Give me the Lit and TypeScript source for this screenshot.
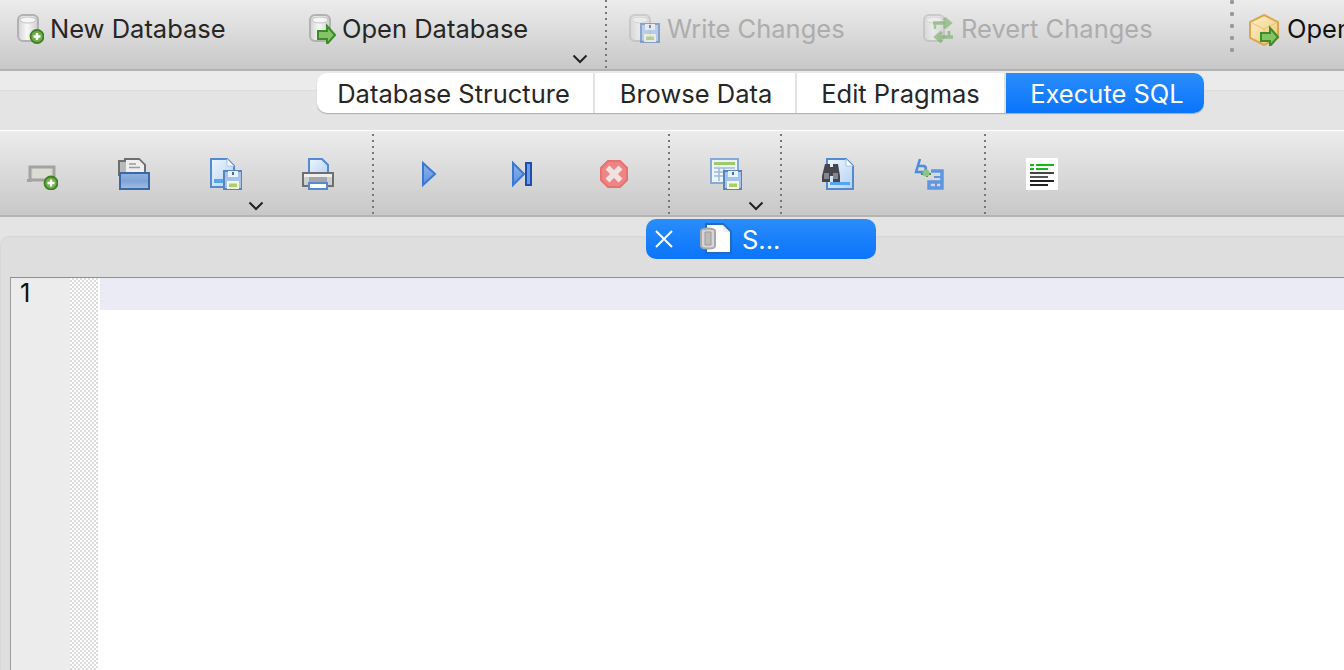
import { LitElement, html, css, svg } from "lit";
import { customElement } from "lit/decorators.js";

const defs = svg`<defs>
  <linearGradient id="cy" x1="0" x2="1" y1="0" y2="0"><stop offset="0" stop-color="#d2d2d2"/><stop offset=".45" stop-color="#f8f8f8"/><stop offset="1" stop-color="#cdcdcd"/></linearGradient>
  <linearGradient id="blu" x1="0" x2="0" y1="0" y2="1"><stop offset="0" stop-color="#8fb3e0"/><stop offset=".5" stop-color="#7ea4d6"/><stop offset="1" stop-color="#a3bfe3"/></linearGradient>
  <linearGradient id="pg" x1="0" x2="1" y1="0" y2="1"><stop offset="0" stop-color="#eef5fd"/><stop offset="1" stop-color="#b3d2f4"/></linearGradient>
  <linearGradient id="rb" x1="0" x2="1" y1="0" y2="1"><stop offset="0" stop-color="#fdf3cf"/><stop offset="1" stop-color="#ecc56f"/></linearGradient>
  <linearGradient id="pl" x1="0" x2="0" y1="0" y2="1"><stop offset="0" stop-color="#8ab3ea"/><stop offset="1" stop-color="#5f92dc"/></linearGradient>
</defs>`;
const cyl = (o = 1) => svg`<g opacity="${o}">
  <rect x="2" y="1" width="20" height="26" rx="5" fill="url(#cy)" stroke="#b2b2b2" stroke-width="2"/>
  <ellipse cx="12" cy="6" rx="8" ry="3" fill="#f6f6f6" stroke="#c4c4c4"/>
</g>`;
const plus = (x: number, y: number, r = 6.500) => svg`<circle cx="${x}" cy="${y}" r="${r}" fill="#6fae4f" stroke="#3f7f20" stroke-width="1.800"/><path d="M${x - 3.500} ${y}h7M${x} ${y - 3.500}v7" stroke="#fff" stroke-width="2.400"/>`;
const arrow = (x: number, y: number) => svg`<path d="M${x} ${y - 4}h9v-5l8 9-8 9v-5h-9z" fill="#86c266" stroke="#3c8c28" stroke-width="2"/>`;
const floppy = (x: number, y: number, o = 1) => svg`<g opacity="${o}" transform="translate(${x} ${y})">
  <path d="M1 1h18v18h-18z" fill="#a4c3ea" stroke="#5a83bd" stroke-width="2"/><path d="M5 1h10v6h-10z" fill="#eaf2fb"/><path d="M9 2h2v3h-2z" fill="#456fa8"/>
  <path d="M4 11h12v8h-12z" fill="#f2f6ea"/><path d="M6 13.500h8v3.500h-8z" fill="#a7cf6a"/></g>`;
const page = (x: number, y: number, w = 25, h = 30) => svg`<g transform="translate(${x} ${y})"><path d="M1 1h${w - 9}l7 7v${h - 9}h-${w - 2}z" fill="url(#pg)" stroke="#5489d4" stroke-width="2"/><path d="M${w - 8} 1v7h7" fill="#fff" stroke="#a9c7ec"/></g>`;

const icons: Record<string, unknown> = {
  newdb: svg`<svg class="i28" viewBox="0 0 28 30">${defs}${cyl()}${plus(21, 22.500)}</svg>`,
  opendb: svg`<svg class="i28" viewBox="0 0 28 30">${defs}${cyl()}${arrow(10, 21)}</svg>`,
  write: svg`<svg class="i32 wide" viewBox="0 0 32 30">${defs}${cyl(.5)}${floppy(12, 9, .65)}</svg>`,
  revert: svg`<svg class="i32 wide" viewBox="0 0 32 30">${defs}${cyl(.5)}<g opacity=".5" fill="none" stroke="#5aa346" stroke-width="3.500"><path d="M11 9h16M22 4l6 5-6 5"/><path d="M31 23H15M20 18l-6 5 6 5"/><path d="M13 10v5M27 17v5" stroke-width="2.500"/></g></svg>`,
  openprj: svg`<svg class="i32" viewBox="0 0 32 32">${defs}<path d="M16 1l14 7v16l-14 7-14-7V8z" fill="url(#rb)" stroke="#dba64e" stroke-width="2"/><path d="M4 9l12 6 12-6M16 15v8" fill="none" stroke="#e6c272"/>${arrow(13, 23)}</svg>`,
  rec: svg`<svg class="i32" viewBox="0 0 32 32">${defs}<path d="M1 22.500h3V9h24v13H5" fill="#d6d6cf" stroke="#a3a3a3" stroke-width="3"/><path d="M7 11h18v9H7z" fill="#dcdcd4"/>${plus(25, 25, 6.500)}</svg>`,
  open: svg`<svg class="i32" viewBox="0 0 32 32">${defs}<path d="M1 3h6V1h14l6 6v10H1z" fill="#b9b9b9" stroke="#6e6e6e" stroke-width="2"/><path d="M8 2h13l5 5v10H8z" fill="#efefef"/><path d="M11 6h7M11 9.500h11" stroke="#9a9a9a" stroke-width="1.500"/><path d="M2 15h29v16H2z" fill="url(#blu)" stroke="#3b68a8" stroke-width="2"/></svg>`,
  save: svg`<svg class="i32" viewBox="0 0 32 32">${defs}${page(0, 0)}<path d="M4 21h9v4H4z" fill="#55a6ee"/>${floppy(13, 12)}</svg>`,
  print: svg`<svg class="i32" viewBox="0 0 32 32">${defs}<path d="M7 1h13l6 6v12H7z" fill="url(#pg)" stroke="#5489d4" stroke-width="2"/><path d="M1 15h30v13H1z" fill="#cfcfcf" stroke="#6f6f6f" stroke-width="2"/><path d="M2 16h28v3H2z" fill="#efefef"/><path d="M7 19h18v6H7z" fill="#a6a6a6"/><path d="M7 25h18v6H7z" fill="#fff" stroke="#5489d4" stroke-width="2"/></svg>`,
  play: svg`<svg class="i32" viewBox="0 0 32 32">${defs}<path d="M9 5l12 11L9 27z" fill="url(#pl)" stroke="#3b78d2" stroke-width="2"/></svg>`,
  step: svg`<svg class="i32" viewBox="0 0 32 32">${defs}<path d="M7 5l11 11L7 27z" fill="url(#pl)" stroke="#3b78d2" stroke-width="2"/><path d="M20 5h5v22h-5z" fill="#6f9ce0" stroke="#1c4db2" stroke-width="2"/></svg>`,
  stop: svg`<svg class="i32" viewBox="0 0 32 32"><path d="M10 3h12l7 7v12l-7 7H10l-7-7V10z" fill="#ed8585" stroke="#e87070" stroke-width="2"/><path d="M9.500 9.500l13 13M22.500 9.500l-13 13" stroke="#f1e2e2" stroke-width="5.500"/></svg>`,
  saveres: svg`<svg class="i32" viewBox="0 0 32 32">${defs}<path d="M1 1h27v24H1z" fill="#eef4fb" stroke="#86a9d8" stroke-width="2"/><path d="M4 4h21v3H4z" fill="#9ecb6a"/><path d="M4 10h21M4 14h10M4 18h10M9 10v13M14 10v13" stroke="#9db9df" stroke-width="1.500"/>${floppy(13, 12)}</svg>`,
  find: svg`<svg class="i32" viewBox="0 0 32 32">${defs}${page(4, 0, 28, 32)}<path d="M8 24h20v3H8z" fill="#55a6ee"/><path d="M3 6h5v3h3V6h5l2 12v6h-7v-6h-3v6H0v-6z" fill="#46464e"/><path d="M2 15h5v6H2zM11 15h5v6h-5z" fill="#85858d"/></svg>`,
  replace: svg`<svg class="i32" viewBox="0 0 32 32"><g fill="none" stroke="#4a8ce0" stroke-width="2.500"><path d="M6 1L2 14h7c3 0 4-5 1-6H5"/></g><path d="M7 16h10M13 12v7" stroke="#3d8a3a" stroke-width="2"/><circle cx="12" cy="15" r="3.500" fill="#8cc28c"/><g fill="none" stroke="#5d97e4" stroke-width="3.500"><path d="M17 13h11v17H15v-6h12"/><path d="M20 19h8M22 24v6" stroke-width="2"/></g></svg>`,
  format: svg`<svg class="crisp i32" viewBox="0 0 32 32"><path d="M0 0h32v32H0z" fill="#fff"/><path d="M4 6h4v2H4zM10 6h18v2H10zM4 10h4v2H4zM10 10h12v2H10z" fill="#11bb11"/><path d="M4 14h24v2H4z" fill="#444"/><path d="M4 18h18v2H4z" fill="#555"/><path d="M4 22h24v2H4z" fill="#222"/><path d="M4 26h18v2H4z" fill="#222"/></svg>`,
  doc: svg`<svg class="i32" viewBox="0 0 32 32"><path d="M6 1h17l8 8v21H6z" fill="#fff" stroke="#2168c8" stroke-width="2"/><path d="M23 2v7h7" fill="#e8eef6"/><path d="M1 8c0-2 2-2.500 7-2.500s7 .5 7 2.500v15c0 2-2 2.500-7 2.500s-7-.5-7-2.500z" fill="#d6d6d6" stroke="#a8a8a8" stroke-width="2"/><path d="M5 9h6v13H5z" fill="#bcbcbc" stroke="#9b9b9b"/></svg>`,
};
const chev = html`<svg class="chev" viewBox="0 0 16 10"><path d="M1.500 1.500L8 8l6.500-6.500" fill="none" stroke="#222" stroke-width="2"/></svg>`;

@customElement("app-root")
export class AppRoot extends LitElement {
  static styles = css`
    :host { display: block; width: 1344px; height: 670px; overflow: hidden; background: #e4e4e4; font-family: Inter, "Liberation Sans", sans-serif; font-size: 25.5px; color: #262626; }
    svg { display: block; flex: none; }
    .i28 { width: 28px; height: 30px; filter: blur(.35px); }
    .i32 { width: 32px; height: 32px; filter: blur(.35px); }
    .i32.crisp { filter: none; }
    .i32.wide { height: 30px; }
    .chev { width: 16px; height: 10px; }

    .bar { display: flex; overflow: hidden; background: linear-gradient(#ececec, #c8c8c8); }
    .top { height: 69px; border-bottom: 2px solid #b2b2b2; }
    .second { height: 84px; border-top: 1px solid #fff; border-bottom: 2px solid #b4b4b4; }

    .tool { flex: none; box-sizing: border-box; display: flex; align-items: flex-start; gap: 6px; padding-top: 14px; line-height: 30px; white-space: nowrap; }
    .tool.off { color: #adadad; gap: 7px; }
    .t-new { width: 308px; padding-left: 16px; }
    .t-open { width: 264px; }
    .t-write { width: 315px; padding-left: 21px; }
    .t-revert { width: 308px; }
    .t-prj { padding-left: 14px; color: #111; gap: 7px; }
    .menu { flex: none; align-self: flex-end; margin: 0 17px 5px 0; }

    .sep { flex: none; width: 2px; height: 81px; margin-top: 3px; background: linear-gradient(#777 0 2px, transparent 2px) 0 0 / 2px 6px repeat-y; }
    .top .sep.a { height: 68px; margin-top: 0; }
    .top .sep.b { width: 4px; height: 52px; margin-top: 0; background: radial-gradient(circle at 2px 2px, #999 2px, transparent 2.300px) 0 0 / 4px 12px repeat-y; }

    .tabband { height: 59px; display: flex; padding: 2px 0 0 317px; background: linear-gradient(#ebebeb 0 19px, #dcdcdc 19px 20px, #e4e4e4 20px); box-sizing: border-box; }
    .tabs { display: flex; height: 40px; background: #fff; border-radius: 10px; overflow: hidden; box-shadow: 0 1px 1px rgba(0,0,0,.25); }
    .tab { display: flex; align-items: center; justify-content: center; box-sizing: border-box; padding-top: 1px; border-right: 2px solid #e2e2e2; }
    .tab.w1 { width: 278px; padding-right: 3px; }
    .tab.w2 { width: 202px; padding-left: 2px; }
    .tab.w3 { width: 209px; }
    .tab.on { width: 198px; padding-left: 4px; background: linear-gradient(#2a8dfb, #0a74fb); color: #fff; border-right: 0; }

    .group { display: flex; gap: 60px; padding: 27px 38px 0 40px; position: relative; }
    .group.first { padding-left: 26px; }
    .slot { position: relative; width: 32px; height: 32px; }
    .slot .chev { position: absolute; left: 38px; top: 43px; }

    .widget { padding-top: 19px; }
    .panel { height: 434px; box-sizing: border-box; padding-left: 9px; background: linear-gradient(#dcdcdc, #dedede 3px); border-top: 1px solid #d6d6d6; border-left: 1px solid #d8d8d8; border-radius: 9px 0 0 0; }
    .doctab { width: 230px; height: 40px; margin: -18px 0 18px 636px; border-radius: 10px; background: linear-gradient(#2a8dfb, #0a74fb); color: #fff; display: flex; align-items: center; box-sizing: border-box; padding-left: 8px; }
    .x { width: 20px; height: 20px; margin-right: 26px; }
    .doctab .i32 { margin-right: 10px; }

    .editor { height: 393px; display: flex; border-top: 1px solid #8f8f8f; border-left: 1px solid #9d9d9d; background: #fff; }
    .gutter { width: 59px; flex: none; background: #ececec; line-height: 30px; color: #111; padding-left: 9px; box-sizing: border-box; }
    .fold { width: 28px; flex: none; margin-right: 2px; background-color: #fff; background-image: conic-gradient(#dcdcdc 25%, #fff 0 50%, #dcdcdc 0 75%, #fff 0); background-size: 4px 4px; }
    .code { flex: 1; }
    .current { height: 32px; background: #ebebf5; }
  `;

  slotIcon(icon: string, menu = false) {
    return html`<div class="slot">${icons[icon]}${menu ? chev : ""}</div>`;
  }

  render() {
    return html`
      <div class="bar top">
        <div class="tool t-new">${icons.newdb}New Database</div>
        <div class="tool t-open">${icons.opendb}Open Database</div>
        <div class="menu">${chev}</div>
        <div class="sep a"></div>
        <div class="tool off t-write">${icons.write}Write Changes</div>
        <div class="tool off t-revert">${icons.revert}Revert Changes</div>
        <div class="sep b"></div>
        <div class="tool t-prj">${icons.openprj}Open Project</div>
      </div>
      <div class="tabband">
        <div class="tabs">
          <div class="tab w1">Database Structure</div>
          <div class="tab w2">Browse Data</div>
          <div class="tab w3">Edit Pragmas</div>
          <div class="tab on">Execute SQL</div>
        </div>
      </div>
      <div class="bar second">
        <div class="group first">${this.slotIcon("rec")}${this.slotIcon("open")}${this.slotIcon("save", true)}${this.slotIcon("print")}</div>
        <div class="sep"></div>
        <div class="group">${this.slotIcon("play")}${this.slotIcon("step")}${this.slotIcon("stop")}</div>
        <div class="sep"></div>
        <div class="group">${this.slotIcon("saveres", true)}</div>
        <div class="sep"></div>
        <div class="group">${this.slotIcon("find")}${this.slotIcon("replace")}</div>
        <div class="sep"></div>
        <div class="group">${this.slotIcon("format")}</div>
      </div>
      <div class="widget">
        <div class="panel">
          <div class="doctab">
            <svg class="x" viewBox="0 0 20 20"><path d="M2 2l16 16M18 2L2 18" stroke="#fff" stroke-width="2"/></svg>
            ${icons.doc}S...
          </div>
          <div class="editor">
            <div class="gutter">1</div>
            <div class="fold"></div>
            <div class="code"><div class="current"></div></div>
          </div>
        </div>
      </div>
    `;
  }
}
